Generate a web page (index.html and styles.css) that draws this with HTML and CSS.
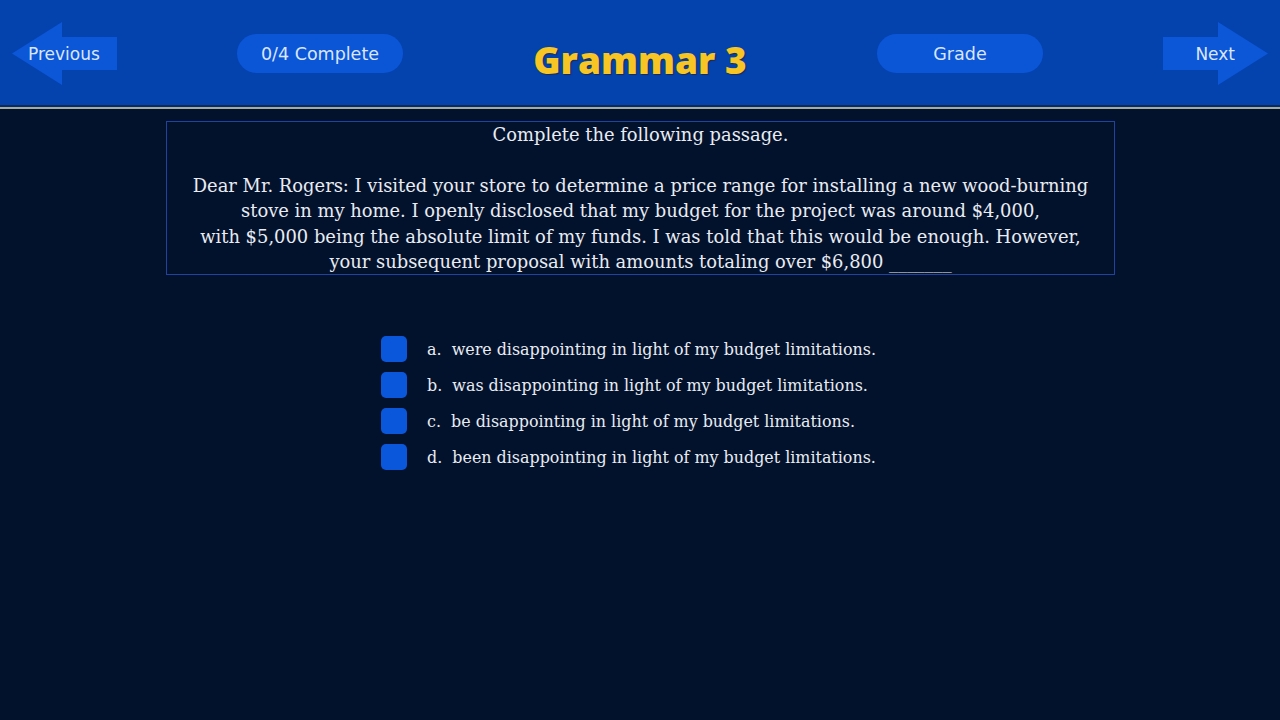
FILE: index.html
```html
<!DOCTYPE html>
<html lang="en">
<head>
<meta charset="utf-8">
<title>Grammar 3</title>
<link rel="stylesheet" href="styles.css">
</head>
<body>
<header class="topbar">
  <button class="arrow arrow-prev" type="button">
    <svg class="arrow-shape" width="105" height="63" viewBox="0 0 105 63"><polygon points="0,31.5 50,0 50,15 105,15 105,48 50,48 50,63" /></svg>
    <span class="arrow-label">Previous</span>
  </button>
  <span class="spacer"></span>
  <button class="pill" type="button">0/4 Complete</button>
  <h1 class="title">Grammar 3</h1>
  <button class="pill" type="button">Grade</button>
  <span class="spacer"></span>
  <button class="arrow arrow-next" type="button">
    <svg class="arrow-shape" width="105" height="63" viewBox="0 0 105 63"><polygon points="105,31.5 55,0 55,15 0,15 0,48 55,48 55,63" /></svg>
    <span class="arrow-label">Next</span>
  </button>
</header>
<main class="content">
  <section class="passage">
    <p class="passage-line">Complete the following passage.</p>
    <p class="passage-line blank">&nbsp;</p>
    <p class="passage-line">Dear Mr. Rogers: I visited your store to determine a price range for installing a new wood-burning<br>stove in my home. I openly disclosed that my budget for the project was around $4,000,<br>with $5,000 being the absolute limit of my funds. I was told that this would be enough. However,<br>your subsequent proposal with amounts totaling over $6,800 _______</p>
  </section>
  <ul class="options">
    <li class="option"><span class="check"></span><span class="option-text">a.&nbsp; were disappointing in light of my budget limitations.</span></li>
    <li class="option"><span class="check"></span><span class="option-text">b.&nbsp; was disappointing in light of my budget limitations.</span></li>
    <li class="option"><span class="check"></span><span class="option-text">c.&nbsp; be disappointing in light of my budget limitations.</span></li>
    <li class="option"><span class="check"></span><span class="option-text">d.&nbsp; been disappointing in light of my budget limitations.</span></li>
  </ul>
</main>
</body>
</html>
```

FILE: styles.css
```css
* { box-sizing: border-box; }
html, body { margin: 0; padding: 0; }
body {
  width: 1280px;
  height: 720px;
  overflow: hidden;
  background: #03122c;
  font-family: "DejaVu Serif", "Liberation Serif", serif;
  color: #e8ecf2;
}
.topbar {
  height: 109px;
  background: #0443ae;
  border-bottom: 2px solid #a4ab9f;
  box-shadow: inset 0 -2px 0 #0b2a5e;
  display: grid;
  grid-template-columns: 105px 120px 166px 1fr 166px 120px 105px;
  align-items: center;
  padding: 0 12px;
}
.arrow {
  position: relative;
  width: 105px;
  height: 63px;
  margin-top: 0;
  padding: 0;
  border: 0;
  background: none;
  display: flex;
  align-items: center;
  font-family: "DejaVu Sans", sans-serif;
  font-size: 17px;
  color: #dbe6fb;
}
.arrow-shape { position: absolute; left: 0; top: 0; }
.arrow-shape polygon { fill: #0c56d8; }
.arrow-label { position: relative; }
.arrow-prev .arrow-label { margin-left: 16px; }
.arrow-next { justify-content: flex-end; }
.arrow-next .arrow-label { margin-right: 33px; }
.pill {
  height: 39px;
  margin-top: 0;
  border: 0;
  border-radius: 20px;
  background: #0b55d7;
  font-family: "DejaVu Sans", sans-serif;
  font-size: 17.5px;
  color: #dbe6fb;
  padding: 0;
}
.title {
  margin: 0;
  margin-top: 12px;
  text-align: center;
  font-family: "Open Sans", sans-serif;
  font-weight: 800;
  font-size: 37px;
  color: #f7c524;
  text-shadow: 1px 1px 1px #1b2a55;
}
.content {
  padding-top: 12px;
}
.passage {
  margin-left: 166px;
  width: 949px;
  border: 1px solid #1f43a0;
  text-align: center;
  font-size: 17.9px;
  line-height: 25.4px;
}
.passage-line { margin: 0; }
.options {
  list-style: none;
  margin: 61px 0 0 381px;
  padding: 0;
  display: flex;
  flex-direction: column;
  gap: 10px;
}
.option {
  display: flex;
  align-items: center;
  height: 26px;
  gap: 20px;
  font-size: 15.9px;
}
.check {
  width: 26px;
  height: 26px;
  border-radius: 5px;
  background: #0b57dc;
  flex: none;
}
```
